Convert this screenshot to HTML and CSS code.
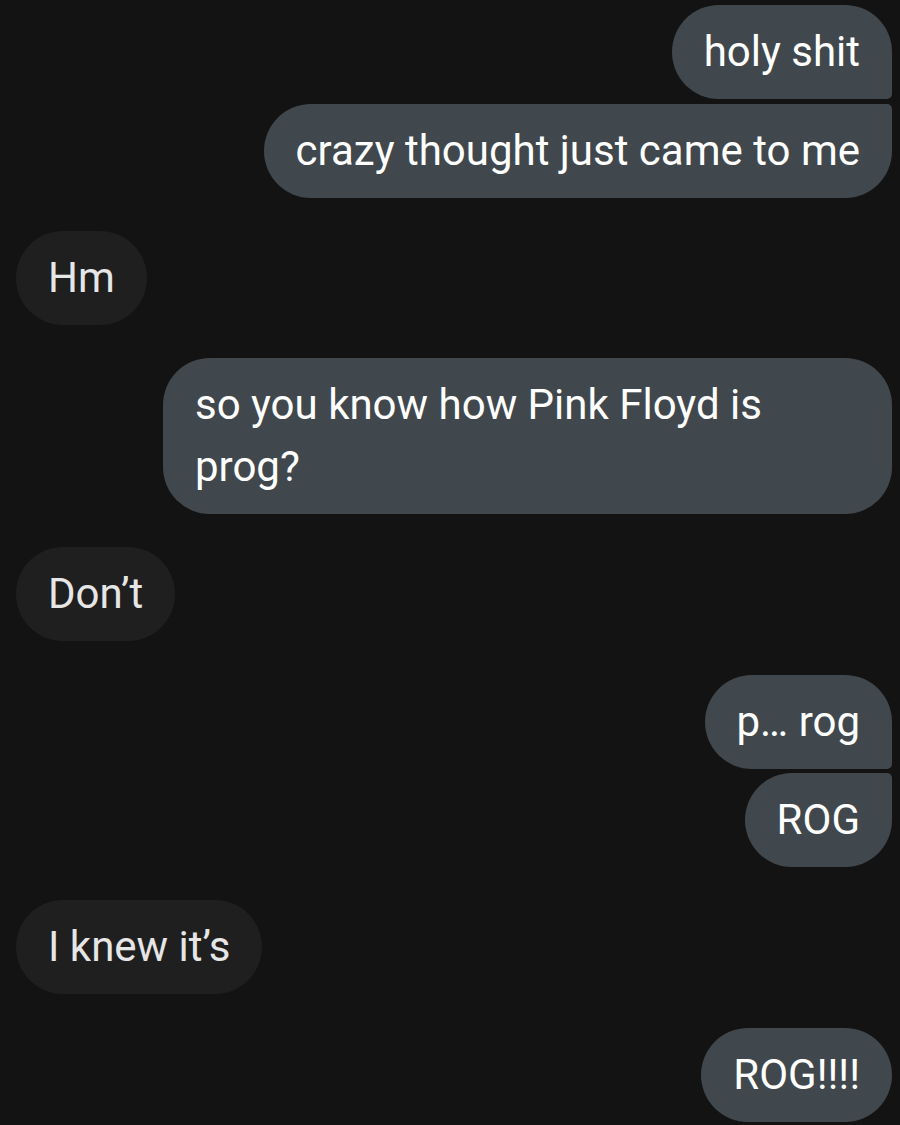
FILE: index.html
```html
<!DOCTYPE html>
<html>
<head>
<meta charset="utf-8">
<link rel="stylesheet" href="styles.css">
</head>
<body>
<div class="thread">
  <div class="group sent">
    <div class="bubble first">holy shit</div>
    <div class="bubble last">crazy thought just came to me</div>
  </div>
  <div class="group recv">
    <div class="bubble">Hm</div>
  </div>
  <div class="group sent">
    <div class="bubble wide">so you know how Pink Floyd is prog?</div>
  </div>
  <div class="group recv">
    <div class="bubble">Don’t</div>
  </div>
  <div class="group sent">
    <div class="bubble first">p… rog</div>
    <div class="bubble last">ROG</div>
  </div>
  <div class="group recv">
    <div class="bubble">I knew it’s</div>
  </div>
  <div class="group sent">
    <div class="bubble">ROG!!!!</div>
  </div>
</div>
</body>
</html>
```

FILE: styles.css
```css
html, body {
  margin: 0;
  padding: 0;
  background: #131313;
}
body {
  width: 900px;
  height: 1125px;
  overflow: hidden;
  font-family: Roboto, "Noto Sans", sans-serif;
}
.thread {
  display: flex;
  flex-direction: column;
  gap: 33.3px;
  padding: 5px 8px 0 16px;
}
.group {
  display: flex;
  flex-direction: column;
  gap: 4.5px;
}
.group.sent {
  align-items: flex-end;
}
.group.recv {
  align-items: flex-start;
}
.bubble {
  box-sizing: border-box;
  max-width: 729px;
  padding: 16px 32px;
  font-size: 42px;
  line-height: 62px;
  border-radius: 47px;
}
.sent .bubble {
  background: #41484d;
  color: #ffffff;
}
.recv .bubble {
  background: #1f1f1f;
  color: #e6e6e6;
}
.sent .bubble.first {
  border-bottom-right-radius: 5px;
}
.sent .bubble.last {
  border-top-right-radius: 5px;
}
.bubble.wide {
  width: 729px;
}
```
